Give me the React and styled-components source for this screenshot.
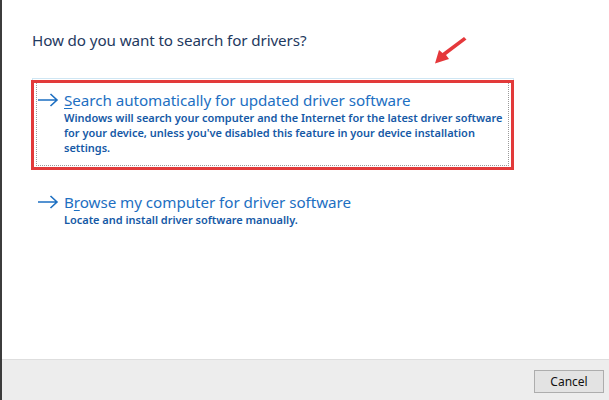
import styled, { createGlobalStyle } from 'styled-components';

const Global = createGlobalStyle`
  html, body { margin: 0; padding: 0; background: #fff; }
  body { font-family: "Noto Sans", "Open Sans", sans-serif; }
`;

const Page = styled.div`
  width: 609px;
  height: 400px;
  box-sizing: border-box;
  border-left: 2px solid #3c3c3c;
  display: flex;
  flex-direction: column;
  background: #fff;
  overflow: hidden;
`;

const Main = styled.div`
  flex: 1;
  padding: 30px 0 0 30px;
  position: relative;
`;

const Title = styled.div`
  font-size: 15.2px;
  color: #1f3a5f;
  line-height: 20px;
  letter-spacing: -0.1px;
`;

const Options = styled.div`
  margin-top: 28px;
  display: flex;
  flex-direction: column;
  gap: 10px;
  width: 482px;
`;

const Option = styled.div`
  position: relative;
  display: flex;
  gap: 5px;
  padding: 11px 8px 14px 4px;
  border: 1px solid ${p => (p.$active ? '#cfe6f3' : 'transparent')};
`;

const Focus = styled.div`
  position: absolute;
  inset: 3px 4px 3px 3px;
  border: 1px dotted #9a9a9a;
  pointer-events: none;
`;

const RedMark = styled.div`
  position: absolute;
  left: -2px;
  top: 1px;
  right: -1px;
  bottom: -1px;
  border: 3px solid #e23a3a;
  pointer-events: none;
`;

const ArrowIcon = styled.svg`
  flex-shrink: 0;
  margin-top: 3px;
`;

const Text = styled.div`
  display: flex;
  flex-direction: column;
`;

const Link = styled.div`
  font-size: 15.2px;
  color: #1d6fc2;
  line-height: 20px;
  letter-spacing: -0.05px;
  white-space: nowrap;
  u { text-decoration: underline; text-underline-offset: 2px; text-decoration-thickness: 1px; }
`;

const Desc = styled.div`
  font-size: 11px;
  font-weight: 600;
  color: #1659a6;
  line-height: 15px;
  letter-spacing: -0.02px;
  white-space: nowrap;
`;

const Pointer = styled.svg`
  position: absolute;
  left: 429px;
  top: 36px;
`;

const Footer = styled.div`
  height: 40px;
  border-top: 1px solid #dedede;
  background: #ededed;
  display: flex;
  align-items: center;
  justify-content: flex-end;
  padding-right: 5px;
`;

const Button = styled.button`
  width: 70px;
  height: 23px;
  border: 1px solid #adadad;
  background: #e3e3e3;
  font-family: "Noto Sans", "Open Sans", sans-serif;
  font-size: 12px;
  color: #111;
  padding: 0;
  margin-top: 2px;
`;

const Arrow = () => (
  <ArrowIcon width="22" height="14" viewBox="0 0 22 14">
    <path d="M1 7 H20 M13.5 1 L20 7 L13.5 13" fill="none" stroke="#1d6fc2" strokeWidth="1.6" />
  </ArrowIcon>
);

const options = [
  {
    key: 'auto',
    active: true,
    title: ['', 'S', 'earch automatically for updated driver software'],
    desc: [
      'Windows will search your computer and the Internet for the latest driver software',
      "for your device, unless you've disabled this feature in your device installation",
      'settings.',
    ],
  },
  {
    key: 'browse',
    title: ['B', 'r', 'owse my computer for driver software'],
    desc: ['Locate and install driver software manually.'],
  },
];

export default function App() {
  return (
    <>
      <Global />
      <Page>
        <Main>
          <Title>How do you want to search for drivers?</Title>
          <Pointer width="36" height="29" viewBox="0 0 36 29">
            <path d="M33 1 L35.5 3.5 L15 19 L18 23 L4 27.5 L8 14 L11.5 17 Z" fill="#e5383b" />
          </Pointer>
          <Options>
            {options.map(o => (
              <Option key={o.key} $active={o.active}>
                {o.active && <Focus />}
                {o.active && <RedMark />}
                <Arrow />
                <Text>
                  <Link>
                    {o.title[0]}
                    <u>{o.title[1]}</u>
                    {o.title[2]}
                  </Link>
                  {o.desc.map(line => (
                    <Desc key={line}>{line}</Desc>
                  ))}
                </Text>
              </Option>
            ))}
          </Options>
        </Main>
        <Footer>
          <Button>Cancel</Button>
        </Footer>
      </Page>
    </>
  );
}
